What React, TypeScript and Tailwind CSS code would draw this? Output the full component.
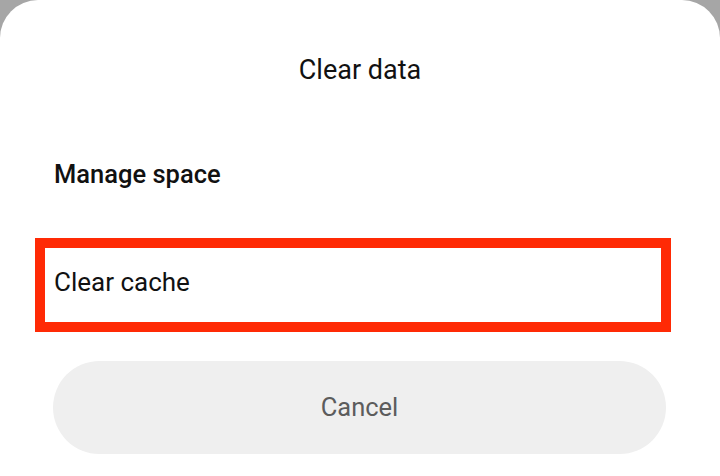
export default function App() {
  return (
    <div className="w-[720px] h-[476px] bg-[#a6a6a6] overflow-hidden" style={{ fontFamily: "Roboto, 'Noto Sans', sans-serif" }}>
      <div className="w-[720px] h-[476px] bg-white rounded-t-[38px] flex flex-col">
        <div className="h-[140px] flex items-center justify-center text-[27px] text-[#111]">Clear data</div>
        <div className="h-[68px] flex items-center pl-[54px] text-[25.5px] font-medium text-[#111]">Manage space</div>
        <div className="mt-[30px] ml-[35px] w-[636px] h-[94px] border-[10px] border-[#ff2a05] flex items-center pl-[9px] pb-[6px] text-[26px] text-[#111]">
          Clear cache
        </div>
        <div className="mt-[29px] ml-[53px] w-[613px] h-[93px] rounded-full bg-[#efefef] flex items-center justify-center text-[25.5px] text-[#5c5c5c]">
          Cancel
        </div>
      </div>
    </div>
  );
}
